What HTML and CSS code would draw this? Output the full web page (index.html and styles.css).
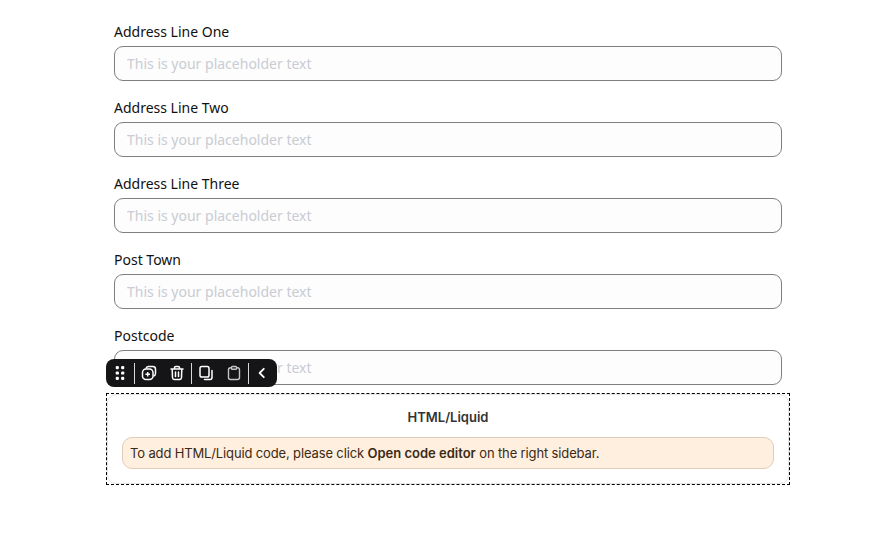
FILE: index.html
```html
<!DOCTYPE html>
<html lang="en">
<head>
    <meta charset="UTF-8">
    <meta name="viewport" content="width=device-width, initial-scale=1.0">
    <title>Address form</title>
    <link rel="stylesheet" href="styles.css">
</head>
<body>
<div class="form">
    <div class="form-group">
        <label for="line1">Address Line One</label>
        <input type="text" id="line1" placeholder="This is your placeholder text">
    </div>
    <div class="form-group">
        <label for="line2">Address Line Two</label>
        <input type="text" id="line2" placeholder="This is your placeholder text">
    </div>
    <div class="form-group">
        <label for="line3">Address Line Three</label>
        <input type="text" id="line3" placeholder="This is your placeholder text">
    </div>
    <div class="form-group">
        <label for="town">Post Town</label>
        <input type="text" id="town" placeholder="This is your placeholder text">
    </div>
    <div class="form-group">
        <label for="postcode">Postcode</label>
        <input type="text" id="postcode" placeholder="This is your placeholder text">
    </div>
</div>
<div class="block">
    <div class="toolbar">
        <span class="tool">
            <svg width="16" height="16" viewBox="0 0 16 16" fill="#fff"><rect x="3.700" y="1.100" width="3.200" height="3.200" rx="1.200"/><rect x="9.100" y="1.100" width="3.200" height="3.200" rx="1.200"/><rect x="3.700" y="6.400" width="3.200" height="3.200" rx="1.200"/><rect x="9.100" y="6.400" width="3.200" height="3.200" rx="1.200"/><rect x="3.700" y="11.700" width="3.200" height="3.200" rx="1.200"/><rect x="9.100" y="11.700" width="3.200" height="3.200" rx="1.200"/></svg>
        </span>
        <span class="tool-group">
            <span class="tool">
                <svg width="16" height="16" viewBox="0 0 16 16" fill="none" stroke="#fff" stroke-width="1.500"><path d="M5 3.600A2.600 2.600 0 0 1 7.400 1.500h4.400a2.700 2.700 0 0 1 2.700 2.700v4.400a2.600 2.600 0 0 1-2 2.500"/><rect x="1.500" y="4" width="10.500" height="10.500" rx="3.500"/><path d="M6.700 6.900v4.600M4.400 9.200H9"/></svg>
            </span>
            <span class="tool">
                <svg width="16" height="16" viewBox="0 0 16 16" fill="none" stroke="#fff" stroke-width="1.500" stroke-linecap="round"><path d="M2 4h12M5.500 4V2.800a1.300 1.300 0 0 1 1.300-1.300h2.400a1.300 1.300 0 0 1 1.300 1.300V4M3.200 4l.3 8.800a1.800 1.800 0 0 0 1.800 1.700h5.400a1.800 1.800 0 0 0 1.800-1.700L12.800 4M6.500 7v4.500M9.500 7v4.500"/></svg>
            </span>
        </span>
        <span class="tool-group">
            <span class="tool">
                <svg width="16" height="16" viewBox="0 0 16 16" fill="none" stroke="#fff" stroke-width="1.500" stroke-linecap="round"><rect x="2" y="1.500" width="9" height="10.500" rx="1.800"/><path d="M14 5.500v7a2 2 0 0 1-2 2H6.500"/></svg>
            </span>
            <span class="tool">
                <svg width="16" height="16" viewBox="0 0 16 16" fill="none" stroke="#c4c4c4" stroke-width="1.400"><path d="M5.500 2.800H4.500a2 2 0 0 0-2 2v7.700a2 2 0 0 0 2 2h7a2 2 0 0 0 2-2V4.800a2 2 0 0 0-2-2h-1"/><rect x="5.500" y="1.500" width="5" height="2.800" rx=".8"/></svg>
            </span>
        </span>
        <span class="tool-group">
            <span class="tool">
                <svg width="16" height="16" viewBox="0 0 16 16" fill="none" stroke="#fff" stroke-width="1.800" stroke-linecap="round" stroke-linejoin="round"><path d="M8.800 3.800 4.600 8l4.200 4.200"/></svg>
            </span>
        </span>
    </div>
    <div class="block-inner">
        <h4 class="block-title">HTML/Liquid</h4>
        <div class="notice">To add HTML/Liquid code, please click <b>Open code editor</b> on the right sidebar.</div>
    </div>
</div>
</body>
</html>
```

FILE: styles.css
```css
body {
    margin: 0;
    padding-top: 20px;
    background-color: #fff;
    font-family: "Noto Sans", sans-serif;
}
.form {
    width: 668px;
    margin-left: 114px;
}
.form-group {
    margin-bottom: 15px;
}
.form-group label {
    display: block;
    height: 22px;
    margin-bottom: 4px;
    padding-top: 1px;
    box-sizing: border-box;
    font-size: 14px;
    line-height: 22px;
    color: #111;
}
.form-group input {
    display: block;
    box-sizing: border-box;
    width: 100%;
    height: 35px;
    padding: 0 12px;
    font-family: "Noto Sans", sans-serif;
    font-size: 14px;
    background-color: #fdfdfd;
    border: 1px solid #7f7f7f;
    border-radius: 9px;
}
.form-group input::placeholder {
    color: #c9ccd3;
}
.block {
    position: relative;
    box-sizing: border-box;
    width: 684px;
    height: 92px;
    margin-left: 106px;
    margin-top: -7px;
    border: 1px dashed #000;
    background-color: #fff;
    font-family: Inter, sans-serif;
}
.block-inner {
    box-sizing: border-box;
    height: 100%;
    padding: 13px 14px;
    border: 1px solid #e6e6e6;
    border-radius: 9px;
}
.block-title {
    margin: 0 0 11px;
    font-size: 13px;
    line-height: 18px;
    font-weight: 600;
    text-align: center;
    color: #333;
}
.notice {
    box-sizing: border-box;
    height: 32px;
    padding: 0 7px;
    font-size: 13px;
    letter-spacing: -0.14px;
    line-height: 30px;
    color: #3b2a14;
    background-color: #ffefdf;
    border: 1px solid #dfcdb9;
    border-radius: 10px;
}
.notice b {
    font-weight: 600;
    letter-spacing: 0;
}
.toolbar {
    position: absolute;
    left: -1px;
    top: -35px;
    z-index: 1;
    display: flex;
    align-items: center;
    width: 171px;
    height: 28px;
    background-color: #151517;
    border-radius: 8px;
}
.tool-group {
    display: flex;
    align-items: center;
    height: 21px;
    border-left: 1px solid #d8d8d8;
}
.tool {
    display: flex;
    align-items: center;
    justify-content: center;
    width: 28px;
    height: 21px;
}
```
